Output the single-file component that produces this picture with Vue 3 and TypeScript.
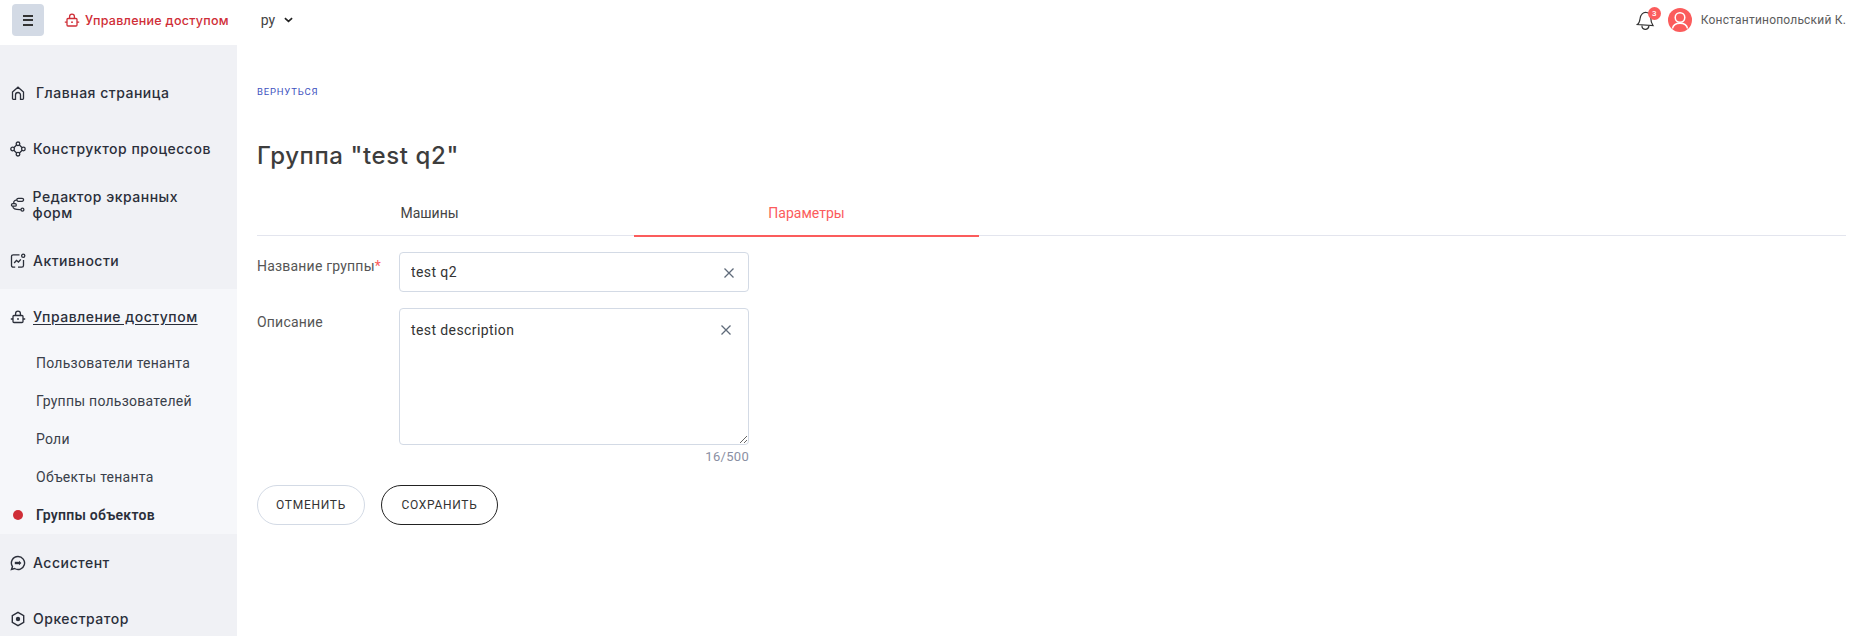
<script setup lang="ts">
import { ref } from 'vue';

interface NavItem { label: string; icon: string }

const topItems: NavItem[] = [
  { label: 'Главная страница', icon: 'home' },
  { label: 'Конструктор процессов', icon: 'nodes' },
  { label: 'Редактор экранных форм', icon: 'flow' },
  { label: 'Активности', icon: 'activity' },
];
const subItems = ['Пользователи тенанта', 'Группы пользователей', 'Роли', 'Объекты тенанта', 'Группы объектов'];
const activeSub = 'Группы объектов';
const bottomItems: NavItem[] = [
  { label: 'Ассистент', icon: 'chat' },
  { label: 'Оркестратор', icon: 'hex' },
];

const groupName = ref('test q2');
const description = ref('test description');
</script>

<template>
  <div class="page">
    <header class="topbar">
      <button class="burger" aria-label="Меню">
        <span></span><span></span><span></span>
      </button>
      <div class="module">
        <svg viewBox="0 0 16 16" width="16" height="16" fill="none" stroke="#cf2e37" stroke-width="1.3">
          <rect x="3" y="6.5" width="10" height="7.5" rx="1" />
          <path d="M5.6 6.5V4.6a2.4 2.4 0 0 1 4.8 0v1.900M.8 10.200H3M13 10.200h2.200" />
          <circle cx="8" cy="10.200" r=".9" fill="#cf2e37" stroke="none" />
        </svg>
        <span>Управление доступом</span>
      </div>
      <div class="lang">
        <span>ру</span>
        <svg viewBox="0 0 10 6" width="9" height="6" fill="none" stroke="#222" stroke-width="1.8"><path d="M1 1l4 3.600L9 1" /></svg>
      </div>
      <div class="user">
        <div class="bell">
          <svg viewBox="0 0 22 22" width="22" height="22" fill="none" stroke="#333" stroke-width="1.2">
            <path d="M1.500 15.500c1.800-1.300 2.200-3 2.600-6C4.600 5.500 7 3 10.500 3.500c3 .4 4.300 2.500 4.300 5.500 0 3 .5 5 2.200 7.500z" />
            <path d="M6 16.500c-.2 2 1 3.500 3 3.800 2 .2 3.500-1 4-3.300" />
          </svg>
          <span class="badge">3</span>
        </div>
        <div class="avatar">
          <svg viewBox="0 0 24 24" width="24" height="24" fill="none" stroke="#fff" stroke-width="1.500">
            <circle cx="12" cy="9.500" r="4.800" />
            <path d="M4.500 20.500c.6-3.600 3-5.300 7.500-5.300s6.900 1.700 7.500 5.300" />
          </svg>
        </div>
        <span class="user-name">Константинопольский К.</span>
      </div>
    </header>

    <div class="body">
      <aside class="sidebar">
        <a v-for="item in topItems" :key="item.label" class="nav-item">
          <svg viewBox="0 0 16 16" width="16" height="16" fill="none" stroke="#2b2f3a" stroke-width="1.300">
            <template v-if="item.icon === 'home'">
              <path d="M2.500 7L8 2.200 13.500 7v6.500a.8.8 0 0 1-.8.8h-2.200V10a2.500 2.500 0 0 0-5 0v4.300H3.300a.8.8 0 0 1-.8-.8z" />
            </template>
            <template v-else-if="item.icon === 'nodes'">
              <circle cx="8" cy="2.800" r="1.800" /><circle cx="8" cy="13.200" r="1.800" />
              <circle cx="2.600" cy="8" r="1.800" /><circle cx="13.400" cy="8" r="1.800" />
              <path d="M6.600 4L3.800 6.700M9.400 4l2.800 2.700M3.800 9.300L6.600 12M12.200 9.300L9.400 12" />
            </template>
            <template v-else-if="item.icon === 'flow'">
              <rect x="7" y="1.200" width="7" height="3" rx="1.500" />
              <path d="M7 2.800C3.800 3.300 3 5.300 4.600 6.600" />
              <rect x="1.500" y="6.600" width="5" height="2.600" rx="1.300" />
              <path d="M3 9.200c-.3 2.600 2.200 3.800 8.200 3.600" />
              <circle cx="12.800" cy="12.800" r="1.500" />
            </template>
            <template v-else-if="item.icon === 'activity'">
              <path d="M9.500 1.800H3.200A1.700 1.700 0 0 0 1.500 3.500v9a1.700 1.700 0 0 0 1.700 1.700h2M8 14.200h3.800a1.700 1.700 0 0 0 1.700-1.700V7" />
              <circle cx="13.200" cy="2.800" r="1.600" />
              <path d="M4.200 10l2.300-2.600 2 1.600 2.300-2.600" stroke-width="1.400" />
            </template>
          </svg>
          <span :class="{ 'home-label': item.icon === 'home' }">{{ item.label }}</span>
        </a>

        <div class="group">
          <a class="nav-item group-head">
            <svg viewBox="0 0 16 16" width="16" height="16" fill="none" stroke="#2b2f3a" stroke-width="1.300">
              <rect x="3" y="6.500" width="10" height="7" rx="1" />
              <path d="M5.600 6.500V4.600a2.400 2.400 0 0 1 4.800 0v1.900M.8 10h2.200M13 10h2.200" />
              <circle cx="8" cy="10" r=".9" fill="#2b2f3a" stroke="none" />
            </svg>
            <span>Управление доступом</span>
          </a>
          <a v-for="sub in subItems" :key="sub" class="sub-item" :class="{ active: sub === activeSub }">
            <i v-if="sub === activeSub" class="dot"></i>
            {{ sub }}
          </a>
        </div>

        <a v-for="item in bottomItems" :key="item.label" class="nav-item low">
          <svg viewBox="0 0 16 16" width="16" height="16" fill="none" stroke="#2b2f3a" stroke-width="1.400">
            <template v-if="item.icon === 'chat'">
              <path d="M8 1.500a6.500 6.500 0 1 1-3.400 12L1.500 14.500l1-2.900A6.500 6.500 0 0 1 8 1.500z" />
              <path d="M4.800 8h4.500" stroke-width="2.400" /><path d="M9 5.800L11.400 8 9 10.200z" fill="#2b2f3a" stroke="none" />
            </template>
            <template v-else>
              <path d="M8 1.300l5.700 3.300v6.800L8 14.700l-5.700-3.300V4.600z" />
              <circle cx="8" cy="8" r="2.200" fill="#2b2f3a" stroke="none" />
            </template>
          </svg>
          <span>{{ item.label }}</span>
        </a>
      </aside>

      <main class="content">
        <a class="back">ВЕРНУТЬСЯ</a>
        <h1 class="title">Группа "test q2"</h1>

        <nav class="tabs">
          <div class="tab">Машины</div>
          <div class="tab active">Параметры</div>
        </nav>

        <div class="form-row">
          <label class="form-label">Название группы<em>*</em></label>
          <div class="field">
            <input v-model="groupName" class="control" type="text" />
            <svg class="clear" viewBox="0 0 12 12" width="12" height="12" fill="none" stroke="#5f6b7a" stroke-width="1.300"><path d="M1.500 1.500l9 9M10.500 1.500l-9 9" /></svg>
          </div>
        </div>

        <div class="form-row">
          <label class="form-label">Описание</label>
          <div class="field">
            <textarea v-model="description" class="control area"></textarea>
            <svg class="clear clear-area" viewBox="0 0 12 12" width="12" height="12" fill="none" stroke="#5f6b7a" stroke-width="1.300"><path d="M1.500 1.500l9 9M10.500 1.500l-9 9" /></svg>
            <div class="counter">16/500</div>
          </div>
        </div>

        <div class="actions">
          <button class="btn cancel">ОТМЕНИТЬ</button>
          <button class="btn save">СОХРАНИТЬ</button>
        </div>
      </main>
    </div>
  </div>
</template>

<style scoped>
.page {
  width: 1864px;
  height: 636px;
  overflow: hidden;
  background: #fff;
  font-family: "Roboto", "Liberation Sans", sans-serif;
  color: #333;
}
.topbar {
  height: 45px;
  display: flex;
  align-items: center;
  padding: 0 18px 5px 12px;
  box-sizing: border-box;
}
.burger {
  width: 32px;
  height: 32px;
  border: 0;
  border-radius: 4px;
  background: #d3dae5;
  display: flex;
  flex-direction: column;
  align-items: center;
  justify-content: center;
  gap: 2.500px;
  padding: 0;
}
.burger span { width: 10px; height: 2px; background: #333; }
.module {
  display: flex;
  align-items: center;
  gap: 5px;
  margin-left: 20px;
  color: #cf2e37;
  font-family: "Inter", "Liberation Sans", sans-serif;
  font-size: 12.500px;
  font-weight: 500;
  letter-spacing: .28px;
}
.lang {
  display: flex;
  align-items: center;
  gap: 9px;
  margin-left: 32px;
  font-size: 14px;
  color: #444;
}
.user {
  margin-left: auto;
  display: flex;
  align-items: center;
}
.bell { position: relative; width: 22px; height: 22px; margin-right: 10px; }
.badge {
  position: absolute;
  top: -2px;
  right: -3px;
  width: 13px;
  height: 13px;
  border-radius: 50%;
  background: #fb5c5c;
  color: #fff;
  font-size: 8px;
  line-height: 13px;
  text-align: center;
  font-weight: 500;
}
.avatar {
  width: 24px;
  height: 24px;
  border-radius: 50%;
  background: #fb5c5c;
  overflow: hidden;
  margin-right: 9px;
}
.user-name { font-size: 12px; letter-spacing: .2px; color: #5c5c5c; }
.body { display: flex; height: 591px; }
.sidebar {
  width: 237px;
  flex: none;
  padding-top: 20px;
  box-sizing: border-box;
  background: #f0f1f5;
  overflow: hidden;
  font-family: "Inter", "Liberation Sans", sans-serif;
}
.nav-item {
  height: 56px;
  display: flex;
  align-items: center;
  padding-left: 10px;
  padding-right: 20px;
  gap: 7px;
  font-size: 14px;
  font-weight: 500;
  letter-spacing: .5px;
  line-height: 16px;
  color: #2b2f3a;
}
.home-label { margin-left: 3px; }
.low { position: relative; top: 1px; }
.group { background: #f6f7fa; height: 245px; }
.group-head { height: 55px; text-decoration: underline; text-underline-offset: 2px; }
.sub-item {
  position: relative;
  display: block;
  height: 38px;
  line-height: 38px;
  padding-left: 36px;
  font-family: "Roboto", "Liberation Sans", sans-serif;
  font-size: 14px;
  letter-spacing: .25px;
  color: #3a3f4a;
}
.sub-item.active { font-weight: 600; color: #2b2f3a; }
.dot {
  position: absolute;
  left: 13px;
  top: 14px;
  width: 10px;
  height: 10px;
  border-radius: 50%;
  background: #cf2e37;
}
.content { flex: 1; padding: 0 18px 0 20px; min-width: 0; }
.back {
  display: block;
  margin-top: 41px;
  height: 12px;
  font-size: 9.500px;
  line-height: 12px;
  letter-spacing: .8px;
  color: #3e52c0;
}
.title {
  margin: 43px 0 0;
  height: 30px;
  font-family: "Inter", "Liberation Sans", sans-serif;
  font-size: 24px;
  line-height: 30px;
  font-weight: 500;
  letter-spacing: .6px;
  color: #3d3d3d;
}
.tabs {
  display: flex;
  gap: 32px;
  margin-top: 19px;
  height: 45px;
  border-bottom: 1px solid #e3e5ee;
}
.tab {
  width: 345px;
  height: 43px;
  padding-top: 1px;
  line-height: 45px;
  text-align: center;
  font-size: 14px;
  color: #444;
}
.tab.active { height: 44px; color: #fb5c5c; border-bottom: 2px solid #fb5c5c; }
.form-row { display: flex; margin-top: 16px; }
.form-label { width: 142px; flex: none; padding-top: 5px; font-size: 14px; line-height: 18px; letter-spacing: .2px; color: #555; }
.form-label em { color: #fb5c5c; font-style: normal; }
.field { position: relative; width: 350px; }
.control {
  display: block;
  width: 100%;
  height: 40px;
  box-sizing: border-box;
  padding: 0 36px 0 11px;
  border: 1px solid #d3dae5;
  border-radius: 4px;
  outline: 0;
  font-family: inherit;
  font-size: 14px;
  letter-spacing: .4px;
  color: #333;
  background: #fff;
}
.area { height: 137px; padding-top: 12px; line-height: 18px; }
.clear { position: absolute; right: 14px; top: 15px; }
.clear-area { top: 16px; right: 17px; }
.counter { margin-top: 5px; text-align: right; font-size: 13px; line-height: 14px; letter-spacing: .3px; color: #8a8fa3; }
.actions { display: flex; gap: 16px; margin-top: 21px; }
.btn {
  height: 40px;
  padding: 0;
  border-radius: 20px;
  background: #fff;
  font-family: inherit;
  font-size: 12px;
  letter-spacing: .7px;
  color: #333;
}
.cancel { width: 108px; border: 1px solid #d3dae5; }
.save { width: 117px; border: 1px solid #222; }
</style>
